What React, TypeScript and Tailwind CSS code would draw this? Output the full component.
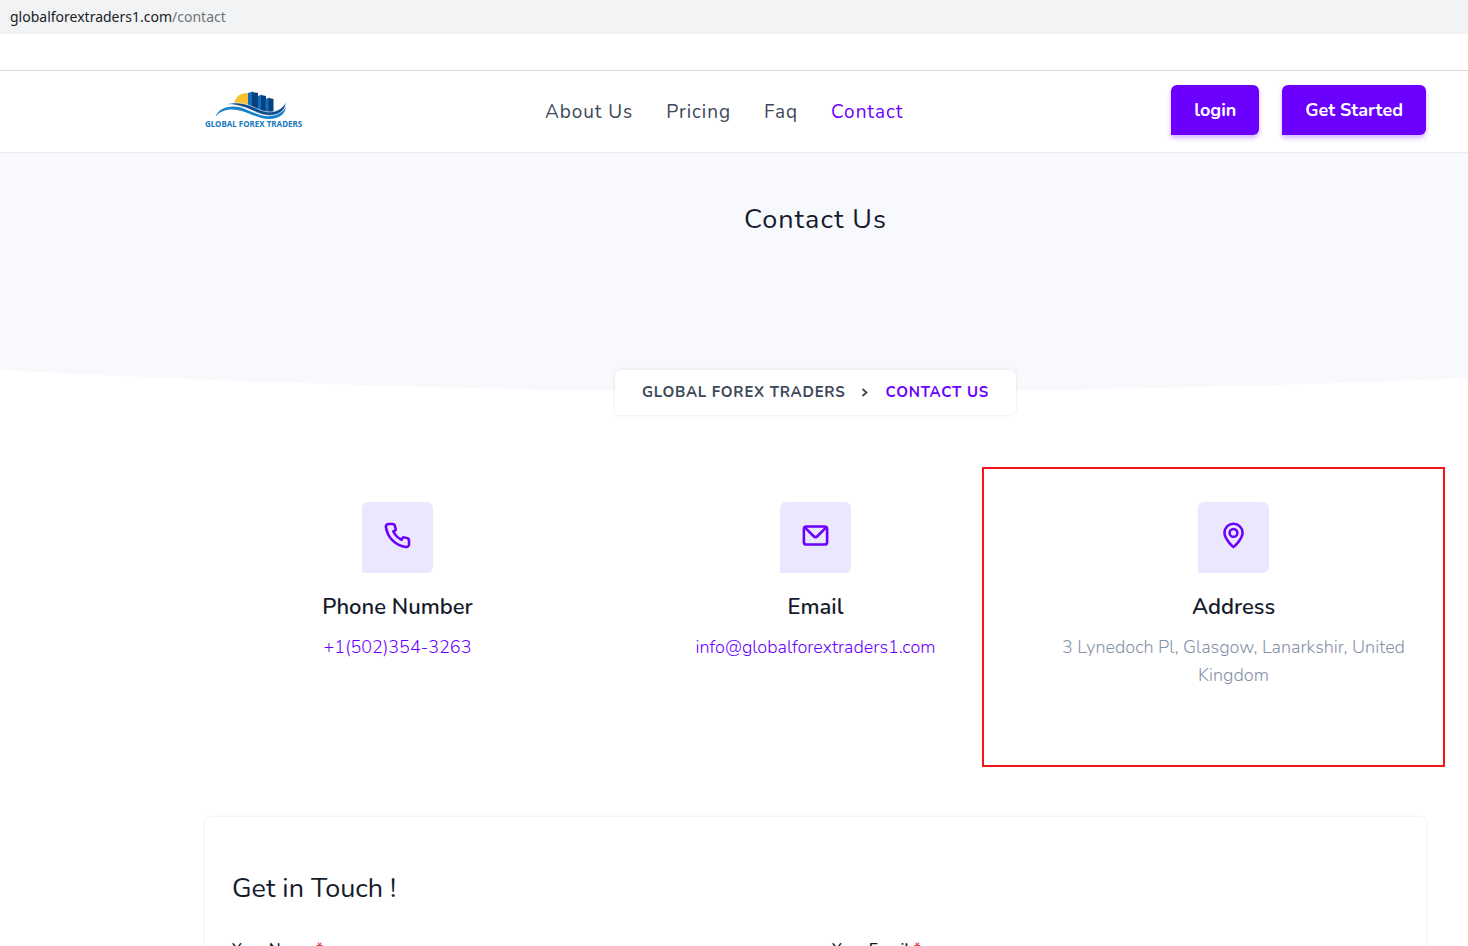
import type { ReactNode } from 'react'

const NAV_LINKS = [
  { label: 'About Us', href: '#about' },
  { label: 'Pricing', href: '#pricing' },
  { label: 'Faq', href: '#faq' },
  { label: 'Contact', href: '#contact', active: true },
]

const PHONE_PATH =
  'M19.44,13c-.22,0-.45-.07-.67-.12a9.44,9.44,0,0,1-1.31-.39,2,2,0,0,0-2.48,1l-.22.45a12.18,12.18,0,0,1-2.66-2,12.18,12.18,0,0,1-2-2.66L10.52,9a2,2,0,0,0,1-2.48,10.33,10.33,0,0,1-.39-1.31c-.05-.22-.09-.45-.12-.68a3,3,0,0,0-3-2.49h-3a3,3,0,0,0-3,3.41A19,19,0,0,0,18.53,21.91l.38,0a3,3,0,0,0,2-.76,3,3,0,0,0,1-2.25v-3A3,3,0,0,0,19.44,13Zm.5,6a1,1,0,0,1-.34.75,1.05,1.05,0,0,1-.82.25A17,17,0,0,1,4.07,5.22a1.09,1.09,0,0,1,.25-.82,1,1,0,0,1,.75-.34h3a1,1,0,0,1,1,.79q.06.41.15.81a11.12,11.12,0,0,0,.46,1.55l-1.4.65a1,1,0,0,0-.49,1.33,14.49,14.49,0,0,0,7,7,1,1,0,0,0,.76,0,1,1,0,0,0,.57-.52l.62-1.4a13.69,13.69,0,0,0,1.58.46q.4.09.81.15a1,1,0,0,1,.79,1Z'
const ENVELOPE_PATH =
  'M19,4H5A3,3,0,0,0,2,7V17a3,3,0,0,0,3,3H19a3,3,0,0,0,3-3V7A3,3,0,0,0,19,4Zm-.41,2-5.88,5.88a1,1,0,0,1-1.42,0L5.41,6ZM20,17a1,1,0,0,1-1,1H5a1,1,0,0,1-1-1V7.41l5.88,5.88a3,3,0,0,0,4.24,0L20,7.41Z'
const MARKER_PATH =
  'M12,2a8,8,0,0,0-8,7.92c0,5.48,7.05,11.58,7.35,11.84a1,1,0,0,0,1.3,0C13,21.5,20,15.4,20,9.92A8,8,0,0,0,12,2Zm0,17.65c-1.67-1.59-6-6-6-9.73a6,6,0,0,1,12,0C18,13.7,13.67,18.06,12,19.65ZM12,6a4,4,0,1,0,4,4A4,4,0,0,0,12,6Zm0,6a2,2,0,1,1,2-2A2,2,0,0,1,12,12Z'

function Logo() {
  return (
    <svg width="100" height="40" viewBox="0 0 100 40" role="img" aria-label="Global Forex Traders">
      <path d="M29 15a12.500 12.500 0 0 1 16-11.500v15z" fill="#fbc02d" />
      <path d="M43 3l5-1.500v19l-5-3z" fill="#0b6fbd" />
      <path d="M47 2l6 1v19l-6-2z" fill="#0a3f7d" />
      <path d="M53 6l4-1.500v19l-4-2z" fill="#0b6fbd" />
      <path d="M56 5l5 1v18l-5-.5z" fill="#0a3f7d" />
      <path d="M60.500 9l4-1.500v18l-4-1z" fill="#0b6fbd" />
      <path d="M63.500 8l5 1v14l-5 1z" fill="#0a3f7d" />
      <path d="M19 14.500C36 10 46 16 55 20c10 4 21 2 26-8 0 9-9 15-21 13C49 23 38 13 19 14.500z" fill="#0d4a8c" stroke="#fff" strokeWidth=".6" />
      <path d="M10.500 27C14 17 27 14 40 19c10 4 17 8 26 7 7-1 12-4 15-9-1 8-8 12-17 12-8 0-16-4-24-7-11-4-23-4-29.500 5z" fill="#1283cc" />
      <text x="0" y="37" fontSize="8" fontWeight="700" fontFamily="'Noto Sans', sans-serif" fill="#1878be">
        GLOBAL FOREX TRADERS
      </text>
    </svg>
  )
}

function NavButton({ children }: { children: ReactNode }) {
  return (
    <button
      type="button"
      className="h-[50px] rounded-md rounded-bl-none bg-[#6c00ff] px-[23px] text-lg font-bold text-white shadow-[0_3px_5px_rgba(108,0,255,0.3)]"
    >
      {children}
    </button>
  )
}

function ContactCard({ icon, title, children }: { icon: string; title: string; children: ReactNode }) {
  return (
    <div className="flex flex-col items-center text-center">
      <div className="grid h-[71px] w-[71px] place-items-center rounded-md rounded-bl-none bg-[#ebe7ff] pb-1">
        <svg width="31" height="31" viewBox="0 0 24 24" fill="#6c00ff" aria-hidden="true">
          <path d={icon} />
        </svg>
      </div>
      <h2 className="mt-5 text-[22px] leading-7 font-semibold text-[#161c2d]">{title}</h2>
      <div className="mt-3 text-lg leading-7 font-light">{children}</div>
    </div>
  )
}

function Field({ id, label, type }: { id: string; label: string; type: string }) {
  return (
    <div>
      <label htmlFor={id} className="block text-base leading-6 font-semibold text-[#161c2d]">
        {label} <span className="text-[#e43f52]">*</span>
      </label>
      <input id={id} type={type} className="mt-2 h-12 w-full rounded-md border border-[#dee2e6] px-3" />
    </div>
  )
}

export default function App() {
  return (
    <div className="h-screen overflow-hidden bg-white font-['Nunito','Open_Sans','Noto_Sans',sans-serif]">
      <div className="h-[34px] bg-[#f1f3f4] px-[10px] font-['Segoe_UI','Noto_Sans',sans-serif] text-sm leading-[34px] text-[#202124]">
        globalforextraders1.com<span className="text-[#6f7377]">/contact</span>
      </div>
      <div className="h-[37px] border-b border-[#d9d9d9]" />

      <header className="flex h-[82px] items-center justify-between border-b border-[#ebecf0] pr-[42px] pl-[205px]">
        <a href="#home" className="pb-1">
          <Logo />
        </a>
        <nav className="flex gap-[33px] pt-0.5 pr-7 text-[19px] tracking-wider">
          {NAV_LINKS.map((link) => (
            <a key={link.label} href={link.href} className={link.active ? 'text-[#6c00ff]' : 'text-[#3c4858]'}>
              {link.label}
            </a>
          ))}
        </nav>
        <div className="flex gap-[23px] pb-1">
          <NavButton>login</NavButton>
          <NavButton>Get Started</NavButton>
        </div>
      </header>

      <section className="bg-[#f8f9fd]">
        <div className="h-[217px] pt-[49px] pr-[42px] pl-[205px] text-center">
          <h1 className="text-[27px] leading-9 tracking-[1px] text-[#161c2d]">Contact Us</h1>
        </div>
        <div className="relative">
          <svg className="block h-[46px] w-full" viewBox="0 0 1468 46" preserveAspectRatio="none" aria-hidden="true">
            <path d="M0 0Q815 44 1631 0V46H0z" fill="#fff" />
          </svg>
          <div className="absolute inset-0 flex justify-center pr-[42px] pl-[205px]">
            <ol className="flex h-[45px] items-center rounded-md rounded-bl-none bg-white px-[27px] text-[15px] font-bold tracking-wider shadow-[0_0_3px_rgba(60,72,88,0.15)]">
              <li>
                <a href="#home" className="text-[#3c4858]">GLOBAL FOREX TRADERS</a>
              </li>
              <li className="px-[15px]" aria-hidden="true">
                <svg width="10" height="10" viewBox="0 0 10 10" fill="none" stroke="#3c4858" strokeWidth="1.800">
                  <path d="M1.500 1L5.500 4.500L1.500 8" />
                </svg>
              </li>
              <li className="text-[#6c00ff]">CONTACT US</li>
            </ol>
          </div>
        </div>
      </section>

      <main className="pr-[42px] pl-[205px]">
        <section className="grid grid-cols-3 gap-[33px] pt-[86px]">
          <ContactCard icon={PHONE_PATH} title="Phone Number">
            <a href="tel:+15023543263" className="text-[#6c00ff]">+1(502)354-3263</a>
          </ContactCard>
          <ContactCard icon={ENVELOPE_PATH} title="Email">
            <a href="mailto:info@globalforextraders1.com" className="text-[#6c00ff]">info@globalforextraders1.com</a>
          </ContactCard>
          <div className="relative">
            <ContactCard icon={MARKER_PATH} title="Address">
              <p className="text-[#8492a6]">3 Lynedoch Pl, Glasgow, Lanarkshir, United Kingdom</p>
            </ContactCard>
            <div className="pointer-events-none absolute -top-[35px] -right-[19px] -left-[59px] h-[300px] border-2 border-[#f5141c]" />
          </div>
        </section>

        <section className="mt-32 rounded-md px-[27px] pt-[54px] pb-10 shadow-[0_0_3px_rgba(60,72,88,0.15)]">
          <h2 className="text-[27px] leading-9 text-[#161c2d]">Get in Touch !</h2>
          <form className="mt-[30px] grid grid-cols-2 gap-[33px]">
            <Field id="name" label="Your Name" type="text" />
            <Field id="email" label="Your Email" type="email" />
          </form>
        </section>
      </main>
    </div>
  )
}
